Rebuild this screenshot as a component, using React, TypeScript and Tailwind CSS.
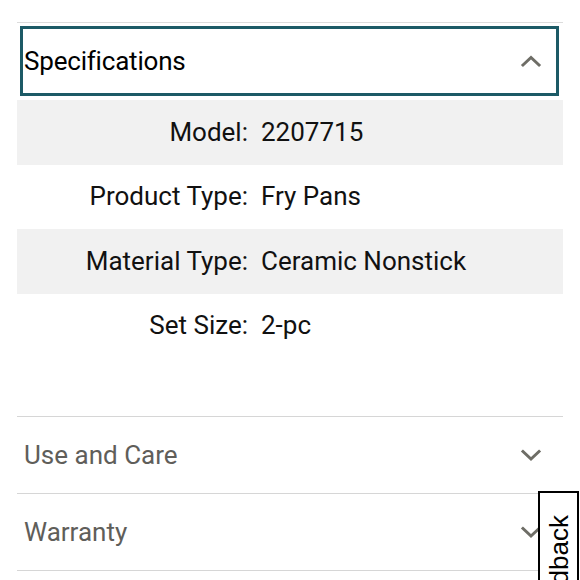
import React from "react";

const Chevron = ({ up }: { up?: boolean }) => (
  <svg width="22" height="14" viewBox="0 0 22 14" className="shrink-0">
    <path
      d={up ? "M3 11 L11 3.5 L19 11" : "M3 3.5 L11 11 L19 3.5"}
      fill="none"
      stroke="#6e6d66"
      strokeWidth="3"
      strokeLinecap="square"
    />
  </svg>
);

const specs: [string, string][] = [
  ["Model:", "2207715"],
  ["Product Type:", "Fry Pans"],
  ["Material Type:", "Ceramic Nonstick"],
  ["Set Size:", "2-pc"],
];

export default function App() {
  return (
    <div className="relative w-[580px] h-[580px] overflow-hidden bg-white font-['Roboto',sans-serif]">
      <div className="pt-[22px] pl-[17px] pr-[17px]">
        <div className="border-t-[1.5px] border-[#dcdcdc]">
          <div className="mt-[3px] ml-[3px] mr-[4px] h-[70px] border-[3px] border-[#1c5a66] flex items-center justify-between pl-[1px] pr-[14px]">
            <span className="text-[26px] text-black tracking-[-0.2px]">Specifications</span>
            <Chevron up />
          </div>
          <div className="mt-[4px]">
            {specs.map(([k, v], i) => (
              <div
                key={k}
                className={`grid grid-cols-[231px_1fr] gap-x-[13px] h-[64.5px] items-center text-[26px] text-[#111] ${
                  i % 2 === 0 ? "bg-[#f1f1f1]" : "bg-white"
                }`}
              >
                <span className="text-right">{k}</span>
                <span>{v}</span>
              </div>
            ))}
          </div>
        </div>
        <div className="mt-[58px] border-t-[1.5px] border-[#d6d6d6] h-[77px] flex items-center justify-between pl-[7px] pr-[21px]">
          <span className="text-[26px] text-[#5f5e5a]">Use and Care</span>
          <Chevron />
        </div>
        <div className="border-t-[1.5px] border-[#d6d6d6] h-[77px] flex items-center justify-between pl-[7px] pr-[21px]">
          <span className="text-[26px] text-[#5f5e5a]">Warranty</span>
          <Chevron />
        </div>
        <div className="border-t-[1.5px] border-[#d6d6d6]"></div>
      </div>
      <div className="absolute left-[538px] top-[491px] w-[41px] border-2 border-black bg-white flex justify-center pt-[22px] pb-[20px]">
        <span className="[writing-mode:vertical-rl] rotate-180 text-[26px] leading-[26px] text-black font-['Liberation_Sans',sans-serif]">
          Feedback
        </span>
      </div>
    </div>
  );
}
